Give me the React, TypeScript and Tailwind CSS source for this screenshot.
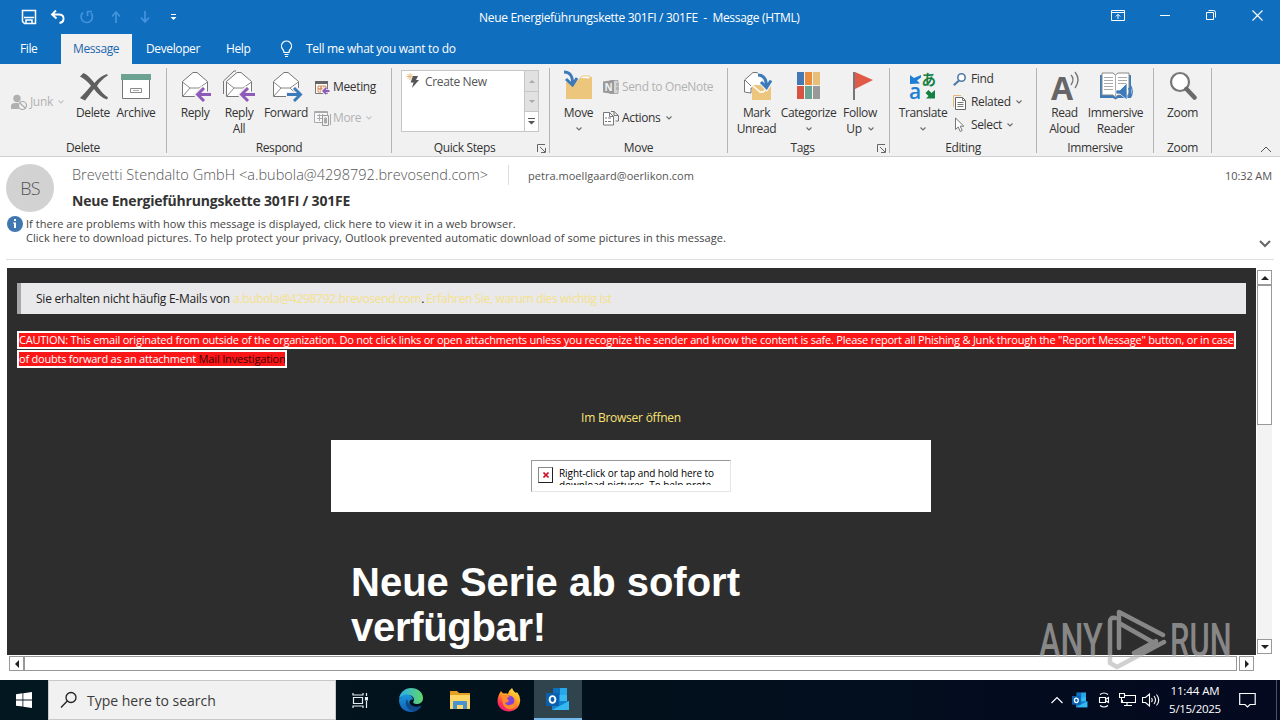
import type { ReactNode } from "react";

const BigButton = ({ icon, lines, caret, className }: { icon: ReactNode; lines: string[]; caret?: boolean; className: string }) => (
    <button className={`flex flex-col items-center shrink-0 pt-[6px] ${className}`}>
        <span className="h-[35px] flex items-start">{icon}</span>
        {lines.map((line, i) => (
            <span key={line} className="h-4 leading-4 flex items-center whitespace-nowrap">
                {line}
                {caret && lines.length > 1 && i === lines.length - 1 && <Caret className="ml-1.5" />}
            </span>
        ))}
        {caret && lines.length === 1 && <Caret className="mt-1.5" />}
    </button>
);

const SmallButton = ({ icon, label, caret, disabled }: { icon: ReactNode; label: string; caret?: boolean; disabled?: boolean }) => (
    <button className={`flex items-center h-5 whitespace-nowrap ${disabled ? "text-[#b1b1b1]" : "text-[#333]"}`}>
        <span className="w-[19px] shrink-0 flex items-center">{icon}</span>
        <span className="tracking-[-0.35px]">{label}</span>
        {caret && <Caret className="ml-[5px]" />}
    </button>
);

const Caret = ({ className = "" }: { className?: string }) => (
    <svg width="6" height="4" viewBox="0 0 6 4" className={`opacity-70 ${className}`}>
        <path d="M.5.5 3 3 5.500.5" fill="none" stroke="currentColor" strokeWidth="1.100" />
    </svg>
);

const Launcher = () => (
    <svg width="9" height="9" viewBox="0 0 9 9" fill="none" stroke="#666">
        <path d="M.5 8V.5H8M3 3l5 5M8.500 4v4.500H4" />
    </svg>
);

const Group = ({ label, launcher, className, children }: { label: string; launcher?: boolean; className: string; children: ReactNode }) => (
    <section className={`flex shrink-0 ${className}`}>
        <div className="flex flex-col flex-1 min-w-0">
            <div className="flex h-[76px]">{children}</div>
            <div className="flex h-4 items-center">
                <span className="flex-1 text-center leading-4">{label}</span>
                {launcher && <span className="w-3"><Launcher /></span>}
            </div>
        </div>
        <div className="w-px h-[85px] mt-1 bg-[#b5b5b5]" />
    </section>
);

/* ribbon icons */
const Envelope = ({ children, double }: { children?: ReactNode; double?: boolean }) => (
    <svg width="34" height="32" viewBox="0 0 34 32" fill="none">
        {double && <path d="M1.500 24V11L12 1h2" stroke="#777" />}
        <path d="M4.500 26.500v-15L15 2.500h4l10.500 9v15z" fill="#fff" stroke="#777" />
        <path d="M4.500 12 12 18h9l8.500-6M5 26l7-8M21 18l4 4" stroke="#888" />
        {children}
    </svg>
);
const ReplyArrow = () => (
    <>
        <path d="M33 24.500H20M26 17.500l-7 7 7 7" stroke="#f1f1f1" strokeWidth="6" />
        <path d="M33 24.500H20M26 18l-6.500 6.500L26 31" stroke="#8f5bb8" strokeWidth="2.900" />
    </>
);
const ForwardArrow = () => (
    <>
        <path d="M17 24.500h14M25 17.500l7 7-7 7" stroke="#f1f1f1" strokeWidth="6" />
        <path d="M18 24.500h13M25 18l6.500 6.500L25 31" stroke="#3c7ab9" strokeWidth="2.900" />
    </>
);
const DeleteIcon = () => (
    <svg width="30" height="30" viewBox="0 0 30 30" fill="#5f5f5f" className="mt-0.5 ml-0.5">
        <path d="M1 4.500 4.500 1C9 3 12 7 15.500 11 19 7 23 3.500 28 2l.800 1.500C24 6.500 20.500 10 18 14c3 4 6.500 8.500 11 11.500L28 27.500c-5-1.500-9.500-5.500-13-10.500-3.500 4-6 8-9 11.500L1 26C5 22 8.500 18 12 13.800 9 10 5 6.500 1 4.500z" />
    </svg>
);
const ArchiveIcon = () => (
    <svg width="32" height="28" viewBox="0 0 32 28" className="mt-[3px]">
        <path d="M2.500 6.500h27v19h-27z" fill="#fff" stroke="#777" />
        <path d="M1 1h30v6H1z" fill="#6ba292" />
        <path d="M10.500 15.500h11v4h-11z" fill="#fff" stroke="#888" />
        <path d="M13 17.500h6" stroke="#aaa" />
    </svg>
);
const JunkIcon = () => (
    <svg width="17" height="17" viewBox="0 0 17 17" fill="#b0b0b0">
        <circle cx="6" cy="4.500" r="3.700" />
        <path d="M0 15v-3q0-3 4-3h3l1 6z" />
        <circle cx="11.500" cy="11.500" r="4" fill="#f1f1f1" stroke="#aaa" strokeWidth="1.200" />
        <path d="m8.500 8.700 6 5.600" stroke="#aaa" strokeWidth="1.200" />
    </svg>
);
const MeetingIcon = () => (
    <svg width="16" height="15" viewBox="0 0 16 15" fill="none">
        <path d="M1.500 3v10.500h12V3" fill="#fff" stroke="#777" />
        <path d="M1 1h13v3H1z" fill="#666" />
        <path d="M4 6h3v3H4zM7 6h3v3H7zM4 9h3v3H4zM10 6h2v3" stroke="#d88b55" />
        <path d="M15.500 11H9m3-3-3 3 3 3" stroke="#f1f1f1" strokeWidth="3.500" />
        <path d="M15.500 11H9.500m2.800-3-3 3 3 3" stroke="#8f5bb8" strokeWidth="1.800" />
    </svg>
);
const MoreIcon = () => (
    <svg width="17" height="16" viewBox="0 0 17 16" fill="none" stroke="#aaa">
        <path d="M.5 1.500h13v11H.5z" fill="#f8f8f8" />
        <path d="M.5 2.500h13M3 5.500h7M3 8.500h5M5.500 4v7M8.500 4v7" />
        <path d="M8.500 5.500h6v10h-6z" fill="#f1f1f1" stroke="#999" />
        <path d="M10.500 8h2v5h-2z" fill="#aaa" />
        <path d="M16.500 4v11" />
    </svg>
);
const BoltIcon = () => (
    <svg width="15" height="16" viewBox="0 0 15 16">
        <path d="M4 0v7M.5 3.500h7M1.500 1l5 5M6.500 1l-5 5" stroke="#e3b878" strokeWidth=".9" />
        <path d="M7 3h5l-2 4h3L6 15l1.500-5.500H4.500z" fill="#555" />
    </svg>
);
const MoveIcon = () => (
    <svg width="31" height="32" viewBox="0 0 31 32">
        <path d="M3 29V12h10l5-5h11v22z" fill="#ecc67c" />
        <path d="M17 8.500 19 6h8v3z" fill="#fff" stroke="#ecc67c" />
        <path d="M1 2q9 0 8.500 12M3 9l6.500 6L14 8" fill="none" stroke="#3c7ab9" strokeWidth="3" />
    </svg>
);
const OneNoteIcon = () => (
    <svg width="17" height="16" viewBox="0 0 17 16">
        <path d="M7 1.500h8v13H7z" fill="#d5d5d5" stroke="#aaa" />
        <path d="M13 4h3v3h-3zM13 8h3v3h-3z" fill="#b5b5b5" />
        <path d="M0 2.500 11 1v14L0 13.500z" fill="#999" />
        <text x="1.500" y="11.500" fontSize="10" fontWeight="700" fill="#f1f1f1" fontFamily="Open Sans, sans-serif">N</text>
    </svg>
);
const ActionsIcon = () => (
    <svg width="17" height="16" viewBox="0 0 17 16" fill="none" stroke="#777">
        <path d="M.5 2.500h6l4 4v8.500H.5z" fill="#fff" />
        <path d="M6.500 2.500v4h4M2 8h2M2 11.500h2M5 8h3M5 11.500h3M8 1.500h3l4.500 4V11h-3M11 1.500v4h4" />
    </svg>
);
const UnreadIcon = () => (
    <svg width="32" height="32" viewBox="0 0 32 32" fill="none">
        <path d="M3.500 22V10L12 2.500h4L25 10v8H10v5z" fill="#fff" stroke="#777" />
        <path d="m4 10 6 6" stroke="#777" />
        <path d="M11 15h19v15H11z" fill="#ecc67c" />
        <path d="m11 15 8 7h3l8-7" stroke="#fff" strokeWidth="1.500" />
        <path d="M17 5q9 0 8.500 12M20 12l5.500 6 4.500-7" stroke="#f1f1f1" strokeWidth="5" />
        <path d="M17 5q8.500 0 8.500 12M20 12l5.500 5.500 4.500-7" stroke="#3c7ab9" strokeWidth="3" />
    </svg>
);
const CategorizeIcon = () => (
    <svg width="26" height="30" viewBox="0 0 26 30" className="mt-px">
        <path d="M1 1h7v13H1z" fill="#4478b5" />
        <path d="M9 1h7v13H9z" fill="#e88d3d" />
        <path d="M17 1h7v13h-7z" fill="#e7bf78" />
        <path d="M1 15h7v13H1z" fill="#d75342" />
        <path d="M9 15h7v13H9z" fill="#6ba292" />
        <path d="M17 15h7v13h-7z" fill="#999" />
    </svg>
);
const FlagIcon = () => (
    <svg width="22" height="32" viewBox="0 0 22 32" className="ml-1">
        <path d="M4 2v17L22 10z" fill="#e05a45" />
        <path d="M2 2h2v28H2z" fill="#777" />
    </svg>
);
const TranslateIcon = () => (
    <svg width="30" height="32" viewBox="0 0 30 32" className="overflow-visible">
        <path d="M2 5v9l10-.5-3-3 4-3V5L6 8z" fill="#1d7fd3" />
        <path d="M27 28.500h-9l2.500-2.500-3-3 3-3 3 3 3.500-3z" fill="#168043" />
        <text x="13.500" y="15" fontSize="14.500" fontWeight="700" fill="#168043" fontFamily="Noto Sans CJK JP, sans-serif">あ</text>
        <text x="1" y="29" fontSize="21" fontWeight="600" fill="#1d7fd3" fontFamily="Open Sans, sans-serif">a</text>
    </svg>
);
const FindIcon = () => (
    <svg width="14" height="13" viewBox="0 0 14 13" fill="none" stroke="#5079a6">
        <circle cx="8.500" cy="4.500" r="3.700" strokeWidth="1.600" fill="#fff" />
        <path d="M6 7.500.8 12.200" strokeWidth="2.200" />
    </svg>
);
const RelatedIcon = () => (
    <svg width="14" height="15" viewBox="0 0 14 15" fill="none">
        <path d="M.5 12V.5H8" stroke="#e3b878" />
        <path d="M2.500 2.500h7l3 3v9h-10z" fill="#fff" stroke="#666" />
        <path d="M9.500 2.500v3h3M4.500 7.500h6M4.500 9.500h6M4.500 11.500h6" stroke="#777" />
    </svg>
);
const SelectIcon = () => (
    <svg width="12" height="16" viewBox="0 0 12 16">
        <path d="M2.500 1v11.500l2.700-2.500 2 4.500 2-1-2-4.300h3.600z" fill="#fff" stroke="#777" />
    </svg>
);
const ReadAloudIcon = () => (
    <svg width="32" height="32" viewBox="0 0 32 32" className="overflow-visible">
        <text x="2" y="29.500" fontSize="32" fontWeight="700" fill="#666" fontFamily="Open Sans, sans-serif">A</text>
        <path d="M22 5q4 4 0 10M26 2q6 7.500 0 16" fill="none" stroke="#777" strokeWidth="1.400" />
    </svg>
);
const ReaderIcon = () => (
    <svg width="34" height="32" viewBox="0 0 34 32" fill="none">
        <path d="M1 5h31v23H19l-2.500 1.500L14 28H1z" fill="#3c7ab9" />
        <path d="M3 3h11l2.500 2L19 3h11v22H19l-2.500 2L14 25H3z" fill="#fff" stroke="#888" />
        <path d="M16.500 5v21M5 7.500h9M5 10.500h9M5 13.500h9M5 16.500h9M5 19.500h9M19 7.500h9M19 10.500h9M19 13.500h9" stroke="#aaa" />
        <path d="M17 20h4l7-7v17l-7-6h-4z" fill="#3c7ab9" stroke="#fff" strokeWidth=".7" />
        <path d="M29.500 18q2 3.500 0 7M31.500 15.500q3.500 6 0 12" stroke="#3c7ab9" strokeWidth="1.300" />
    </svg>
);
const ZoomIcon = () => (
    <svg width="28" height="30" viewBox="0 0 28 30" className="mt-px">
        <circle cx="11" cy="11" r="9" fill="#fff" stroke="#777" strokeWidth="2.200" />
        <path d="m17.500 18 8 8.500" stroke="#6a6a6a" strokeWidth="4.500" strokeLinecap="round" />
    </svg>
);

/* shared by the taskbar button and the tray */
const OutlookIcon = ({ size }: { size: number }) => (
    <svg width={size} height={size} viewBox="0 0 24 24">
        <path d="M7 1h14v17H7z" fill="#1490df" />
        <path d="M7 1h7v7H7z" fill="#0f6fbf" />
        <path d="M14 1h7v7h-7z" fill="#28a8ea" />
        <path d="M14 8h7v6h-7z" fill="#50d9ff" opacity=".6" />
        <path d="M6 14h17v9H6z" fill="#1481cf" />
        <path d="m6 23 17-9v9z" fill="#35b8f1" />
        <path d="M0 6h13v13H0z" fill="#0a5fae" />
        <ellipse cx="6.500" cy="12.500" rx="2.900" ry="3.400" fill="none" stroke="#fff" strokeWidth="1.900" />
    </svg>
);

const TitleBar = () => (
    <div className="flex h-[34px] items-center justify-between text-white relative">
        <div className="flex items-center pl-[21px]">
            <svg width="16" height="16" viewBox="0 0 16 16" fill="none" stroke="#fff" strokeWidth="1.500" className="mr-[13px]">
                <path d="M1.500 1.500h13v13h-11l-2-2zM3 8.500h10M5 14.500v-3.500h6v3.500" />
            </svg>
            <svg width="16" height="16" viewBox="0 0 16 16" fill="none" stroke="#fff" strokeWidth="1.900" className="mr-[13px]">
                <path d="M6 1.500 2 5.500l4.500 4M2 5.500h7.500q4.500.5 4 5-.5 3-4 3.500" />
            </svg>
            <svg width="16" height="16" viewBox="0 0 16 16" fill="none" stroke="#4393dc" strokeWidth="1.700" className="mr-[15px]">
                <path d="M4 3.500A5.700 5.700 0 1 0 12 4M8.500 7V2.500H13" />
            </svg>
            <svg width="12" height="14" viewBox="0 0 12 14" fill="none" stroke="#4393dc" strokeWidth="1.700" className="mr-[17px]">
                <path d="M6 13V3M2 6.500 6 2l4 4.500" />
            </svg>
            <svg width="12" height="14" viewBox="0 0 12 14" fill="none" stroke="#4393dc" strokeWidth="1.700" className="mr-[19px]">
                <path d="M6 1v10M2 7.500 6 12l4-4.500" />
            </svg>
            <svg width="7" height="8" viewBox="0 0 7 8" fill="#fff">
                <path d="M1 1h5v1H1zM.5 4h6l-3 3z" />
            </svg>
        </div>
        <div className="absolute left-[479px] top-[10px] text-[12px] leading-4 tracking-[-0.32px] whitespace-pre">{"Neue Energieführungskette 301FI / 301FE  -  Message (HTML)"}</div>
        <div className="flex items-center pr-[17px] -mt-1">
            <svg width="14" height="11" viewBox="0 0 14 11" fill="none" stroke="#fff" className="mr-[35px]">
                <path d="M.5.5h13v10H.5zM.5 2.500h13M7 9V4.500M4.800 6.500 7 4.300l2.200 2.200" />
            </svg>
            <svg width="10" height="11" viewBox="0 0 10 11" stroke="#fff" className="mr-9"><path d="M0 5.500h10" /></svg>
            <svg width="10" height="10" viewBox="0 0 10 10" fill="none" stroke="#fff" className="mr-9">
                <path d="M.5 2.500h7v7h-7z" /><path d="M2.500.5h5q2 0 2 2v5" />
            </svg>
            <svg width="11" height="11" viewBox="0 0 11 11" stroke="#fff" strokeWidth="1.100"><path d="m.5.5 10 10M10.500.5l-10 10" /></svg>
        </div>
    </div>
);

const Tabs = () => (
    <nav className="flex h-[30px] text-white text-[12px] tracking-[-0.38px] leading-[30px]">
        <span className="w-[61px] pl-5">File</span>
        <span className="w-[71px] pl-3 bg-[#f1f1f1] text-[#1a65ad]">Message</span>
        <span className="w-[94px] pl-3.5">Developer</span>
        <span className="w-[54px]">Help</span>
        <svg width="13" height="18" viewBox="0 0 13 18" fill="none" stroke="#fff" strokeWidth="1.200" className="mt-1.5 mr-[13px]">
            <path d="M4 12.500q0-2-1.500-3.500a5 5 0 1 1 8 0Q9 10.500 9 12.500zM4.500 14.500h4M5 16.500h3" />
        </svg>
        <span className="tracking-[-0.3px]">Tell me what you want to do</span>
    </nav>
);

const Ribbon = () => (
    <div className="flex h-[93px] bg-[#f1f1f1] border-b border-[#d0d0d0] text-[12px] tracking-[-0.37px] text-[#333]">
        <Group label="Delete" className="w-[167px]">
            <div className="w-[70px] pl-[11px] pt-7 shrink-0">
                <SmallButton icon={<JunkIcon />} label="Junk" caret disabled />
            </div>
            <BigButton className="w-11 ml-px" icon={<DeleteIcon />} lines={["Delete"]} />
            <BigButton className="w-11 -ml-px" icon={<ArchiveIcon />} lines={["Archive"]} />
        </Group>
        <Group label="Respond" className="w-[225px]">
            <BigButton className="w-11 ml-[6px]" icon={<Envelope><ReplyArrow /></Envelope>} lines={["Reply"]} />
            <BigButton className="w-11" icon={<Envelope double><ReplyArrow /></Envelope>} lines={["Reply", "All"]} />
            <BigButton className="w-[50px]" icon={<Envelope><ForwardArrow /></Envelope>} lines={["Forward"]} />
            <div className="pt-[13px] pl-[3px] flex flex-col gap-[11px]">
                <SmallButton icon={<MeetingIcon />} label="Meeting" />
                <SmallButton icon={<MoreIcon />} label="More" caret disabled />
            </div>
        </Group>
        <Group label="Quick Steps" launcher className="w-[158px]">
            <div className="flex w-[138px] h-[62px] mt-[6px] ml-[9px] bg-white border border-[#c6c6c6] text-[#555]">
                <div className="flex-1 flex items-start pl-1 pt-0.5">
                    <BoltIcon />
                    <span className="ml-1 mt-px leading-4 tracking-[-0.35px]">Create New</span>
                </div>
                <div className="w-[14px] border-l border-[#c6c6c6] flex flex-col">
                    <span className="h-[21px] bg-[#e1e1e1] border-b border-[#c6c6c6] flex items-center justify-center">
                        <svg width="6" height="3" viewBox="0 0 6 3" fill="#aaa"><path d="M0 3 3 0l3 3z" /></svg>
                    </span>
                    <span className="h-5 bg-[#e1e1e1] border-b border-[#c6c6c6] flex items-center justify-center">
                        <svg width="6" height="3" viewBox="0 0 6 3" fill="#aaa"><path d="m0 0 3 3 3-3z" /></svg>
                    </span>
                    <span className="flex-1 flex items-center justify-center">
                        <svg width="7" height="7" viewBox="0 0 7 7" fill="#555"><path d="M0 0h7v1H0zM0 3h7L3.500 6.500z" /></svg>
                    </span>
                </div>
            </div>
        </Group>
        <Group label="Move" className="w-[178px]">
            <BigButton className="w-[41px] ml-2" icon={<MoveIcon />} lines={["Move"]} caret />
            <div className="pt-[13px] pl-[4px] flex flex-col gap-[11px]">
                <SmallButton icon={<OneNoteIcon />} label="Send to OneNote" disabled />
                <SmallButton icon={<ActionsIcon />} label="Actions" caret />
            </div>
        </Group>
        <Group label="Tags" launcher className="w-[162px]">
            <BigButton className="w-[45px] ml-[6px]" icon={<UnreadIcon />} lines={["Mark", "Unread"]} />
            <BigButton className="w-[59px]" icon={<CategorizeIcon />} lines={["Categorize"]} caret />
            <BigButton className="w-[42px] ml-[1px]" icon={<FlagIcon />} lines={["Follow", "Up"]} caret />
        </Group>
        <Group label="Editing" className="w-[147px]">
            <BigButton className="w-[50px] ml-2" icon={<TranslateIcon />} lines={["Translate"]} caret />
            <div className="pt-[5px] pl-[5px] flex flex-col gap-[3px] [&_span:first-child]:w-[18px]">
                <SmallButton icon={<FindIcon />} label="Find" />
                <SmallButton icon={<RelatedIcon />} label="Related" caret />
                <SmallButton icon={<SelectIcon />} label="Select" caret />
            </div>
        </Group>
        <Group label="Immersive" className="w-[117px]">
            <BigButton className="w-[37px] ml-[9px]" icon={<ReadAloudIcon />} lines={["Read", "Aloud"]} />
            <BigButton className="w-[57px] ml-1" icon={<ReaderIcon />} lines={["Immersive", "Reader"]} />
        </Group>
        <Group label="Zoom" className="w-[58px]">
            <BigButton className="w-[57px]" icon={<ZoomIcon />} lines={["Zoom"]} />
        </Group>
        <div className="flex-1 flex justify-end items-end pr-2 pb-[3px]">
            <svg width="12" height="7" viewBox="0 0 12 7" fill="none" stroke="#555"><path d="m1 6 5-5 5 5" /></svg>
        </div>
    </div>
);

const MessageHeader = () => (
    <header className="h-[103px] mx-[6px] border-b border-[#e0e0e0] flex flex-col">
        <div className="flex h-[58px]">
            <div className="w-12 h-12 mt-[7px] rounded-full bg-[#d2d2d2] text-[#555] text-[18px] tracking-[-0.8px] font-light flex items-center justify-center">BS</div>
            <div className="ml-[18px] flex-1 min-w-0">
                <div className="flex items-center h-5 mt-2 text-[#555]">
                    <span className="text-[14.5px] tracking-[0.03px] font-light w-[436px] whitespace-nowrap">Brevetti Stendalto GmbH &lt;a.bubola@4298792.brevosend.com&gt;</span>
                    <span className="w-px h-5 bg-[#ddd]" />
                    <span className="ml-[19px] text-[11px] tracking-[0.03px] flex-1 mt-0.5">petra.moellgaard@oerlikon.com</span>
                    <span className="text-[11px] tracking-[-0.1px] mt-0.5 mr-[2px]">10:32 AM</span>
                </div>
                <h1 className="mt-1.5 text-[14px] tracking-[-0.21px] leading-5 font-bold text-[#333]">Neue Energieführungskette 301FI / 301FE</h1>
            </div>
        </div>
        <div className="flex text-[11px] leading-[14px] text-[#444]">
            <svg width="16" height="16" viewBox="0 0 16 16" className="ml-px mt-px mr-[3px]">
                <circle cx="8" cy="8" r="8" fill="#3f77b0" />
                <path d="M7 3h2v2H7zM6 6.500h3V12H7V7.500H6z" fill="#fff" />
            </svg>
            <div className="flex-1 mt-0.5">
                <p className="tracking-[0.03px]">If there are problems with how this message is displayed, click here to view it in a web browser.</p>
                <p className="tracking-[0.043px]">Click here to download pictures. To help protect your privacy, Outlook prevented automatic download of some pictures in this message.</p>
            </div>
            <svg width="12" height="8" viewBox="0 0 12 8" fill="none" stroke="#666" strokeWidth="2" className="mt-[25px] mr-[3px]"><path d="m1 1 5 5 5-5" /></svg>
        </div>
    </header>
);

const MailBody = () => (
    <article className="w-[1249px] h-[387px] bg-[#2d2d2d] overflow-hidden pt-[15px] pl-[10px] pr-[10px]">
        <div className="h-[31px] bg-[#e9e8ea] border-l-4 border-[#a6a6a6] pl-[15px] leading-[32px] text-[12px] tracking-[-0.22px] text-[#222] flex whitespace-pre">
            <span className="w-[197px]">Sie erhalten nicht häufig E-Mails von</span>
            <span className="text-[#f4e28c] tracking-[-0.3px]">a.bubola@4298792.brevosend.com</span>
            <span className="w-[5px]">.</span>
            <span className="text-[#f4e28c] tracking-[-0.36px]">Erfahren Sie, warum dies wichtig ist</span>
        </div>
        <div className="mt-[17px] flex flex-col items-start gap-px text-[11px] tracking-[-0.224px] text-white whitespace-pre">
            <p className="h-[18px] w-[1219px] leading-[14px] border-2 border-white bg-[#fb1718]">CAUTION: This email originated from outside of the organization. Do not click links or open attachments unless you recognize the sender and know the content is safe. Please report all Phishing &amp; Junk through the "Report Message" button, or in case</p>
            <p className="h-[18px] w-[270px] leading-[14px] border-2 border-white bg-[#fb1718]">of doubts forward as an attachment <span className="text-[#3a0808] tracking-[-0.17px]">Mail Investigation</span></p>
        </div>
        <p className="mt-[41px] h-[18px] leading-[18px] text-center text-[12px] tracking-[-0.24px] text-[#fbe373] pr-px">Im Browser öffnen</p>
        <div className="w-[600px] ml-[314px] mt-[13px]">
            <div className="h-[72px] bg-white flex justify-center items-center">
                <div className="w-[200px] h-8 border border-t-[#999] border-l-[#999] border-[#e6e6e6] flex pl-1.5 pt-1.5">
                    <span className="w-[15px] h-4 border border-t-[#888] border-l-[#888] border-b-[#222] border-r-[#222] flex items-center justify-center shrink-0">
                        <svg width="6" height="6" viewBox="0 0 6 6" stroke="#d0142c" strokeWidth="1.600"><path d="m.5.5 5 5M5.500.5l-5 5" /></svg>
                    </span>
                    <p className="ml-1.5 h-[18px] overflow-hidden text-[10px] leading-3 tracking-[-0.07px] text-black whitespace-nowrap">
                        Right-click or tap and hold here to<br />download pictures. To help prote
                    </p>
                </div>
            </div>
            <h2 className="mt-12 pl-5 font-['Liberation_Sans',sans-serif] font-bold text-[40px] leading-[45px] text-white">
                Neue Serie ab sofort<br /><span className="tracking-[-0.3px]">verfügbar!</span>
            </h2>
        </div>
    </article>
);

const ArrowBox = ({ d, className }: { d: string; className: string }) => (
    <span className={`border border-[#999] bg-white flex items-center justify-center shrink-0 ${className}`}>
        <svg width="8" height="8" viewBox="0 0 8 8" fill="#222"><path d={d} /></svg>
    </span>
);

const Watermark = () => (
    <div className="absolute left-[1039px] top-[607px] w-[196px] h-[66px] flex items-center opacity-65 text-[#b8b8b8] font-['Roboto',sans-serif] font-medium text-[49px] leading-none">
        <span className="w-[66px] shrink-0"><span className="inline-block origin-left scale-x-[0.66]">ANY</span></span>
        <svg width="62" height="66" viewBox="0 0 62 66" fill="none" stroke="currentColor" strokeWidth="4.500" strokeLinejoin="round" strokeLinecap="round" className="shrink-0">
            <path d="M10 11q-5-1-5 4v41M14 41V5l44 23M14 16l37 21M59 35 12 60 5 56M29 46l22-12" />
        </svg>
        <span className="ml-[3px] shrink-0 w-[62px]"><span className="inline-block origin-left scale-x-[0.63]">RUN</span></span>
    </div>
);

const Taskbar = () => (
    <footer className="h-10 mt-2 flex items-center bg-gradient-to-r from-[#02171f] via-[#02101c] to-[#040920]">
        <svg width="48" height="40" viewBox="0 0 48 40" fill="#fff">
            <path d="m16 14.200 6.500-.9v6.200H16zM23.300 13.200 32 12v7.500h-8.700zM16 20.400h6.500v6.200l-6.500-.9zM23.300 20.400H32V28l-8.700-1.200z" />
        </svg>
        <div className="w-72 h-10 bg-[#f1f1f1] border border-[#c8c8c8] flex items-center pl-[11px] text-[14px] text-[#3b3b3b]">
            <svg width="18" height="18" viewBox="0 0 18 18" fill="none" stroke="#222" strokeWidth="1.300">
                <circle cx="11" cy="6.500" r="5" /><path d="M7.300 10 1 16.500" />
            </svg>
            <span className="ml-[9px]">Type here to search</span>
        </div>
        <div className="w-12 flex justify-center">
            <svg width="16" height="16" viewBox="0 0 16 16" fill="none" stroke="#e8eef0" strokeWidth="1.200">
                <path d="M1.500 5.500h9v6h-9zM1 1v2h10V1M1 16v-2h10v2M14.500 1v3M14.500 9v7" /><path d="M13.500 5.500h2v2.500h-2z" fill="#fff" />
            </svg>
        </div>
        <div className="w-[54px] flex justify-center">
            <svg width="24" height="24" viewBox="0 0 24 24">
                <defs>
                    <linearGradient id="edgeTop" x1="0" x2="1"><stop stopColor="#2aaeea" /><stop offset="1" stopColor="#62d66b" /></linearGradient>
                    <linearGradient id="edgeBody" x1="0" y1="0" x2="0" y2="1"><stop stopColor="#1b97dc" /><stop offset="1" stopColor="#1060b5" /></linearGradient>
                </defs>
                <path d="M0 11C1 4 6 0 12 0c7 0 12 4.500 12 10 0 4-3 6-6.500 6-2.500 0-4-1-3-2.500C16 11 14 7 9.500 7 5 7 1 9 0 11z" fill="url(#edgeTop)" />
                <path d="M0 12c1-4 5-6 9-5.500 3 .5 5 3 5 5C9 11 9 17 15 19c3 1 5.500 0 7.500-1.500C20 22 16 24 12 24 5 24 0 19 0 12z" fill="url(#edgeBody)" />
                <path d="M8 11c-3 4-1 10 6 12.500 3-.5 6-2 8.500-6C17 20.500 9 18 8 11z" fill="#114a8b" />
            </svg>
        </div>
        <div className="w-11 flex justify-center">
            <svg width="22" height="20" viewBox="0 0 22 20">
                <path d="M1 1h7l2 2h11v5H1z" fill="#e5a024" />
                <path d="M1 5h20v14H1z" fill="#ffd767" />
                <path d="M4 19v-7q0-1 1-1h12q1 0 1 1v7h-4v-4H8v4z" fill="#4693cf" />
            </svg>
        </div>
        <div className="w-[52px] pl-0.5 flex justify-center">
            <svg width="24" height="24" viewBox="0 0 24 24">
                <defs>
                    <linearGradient id="fox" x1=".8" y1="0" x2=".2" y2="1"><stop stopColor="#ffe63d" /><stop offset=".45" stopColor="#ff9a24" /><stop offset=".75" stopColor="#ff3750" /><stop offset="1" stopColor="#e31587" /></linearGradient>
                </defs>
                <path d="M4 3q1 2 3 2.500Q10 5 11 6q1-4 4-6 1 3 4 5l1-1q4 5 3 10c-1 6-6 9.500-11 9.500C5.500 23.500.5 19 .5 13 .5 9 2 6 4 3z" fill="url(#fox)" />
                <circle cx="12" cy="13" r="5.500" fill="#8042d8" />
                <path d="M5 8q4-2 8 1-3 0-3 2 3 1 1 3-2 1-3 0 1 4 5 3 5-1 5-6 3 8-3 10-7 1-9-5-1-4-1-8z" fill="#ff8b2b" />
            </svg>
        </div>
        <div className="w-12 h-10 bg-[#30444e] border-b-2 border-[#76b9ed] flex items-center justify-center"><OutlookIcon size={24} /></div>
        <div className="flex-1" />
        <div className="flex items-center text-white">
            <svg width="12" height="8" viewBox="0 0 12 8" fill="none" stroke="#fff" strokeWidth="1.200"><path d="m.5 7 5.500-5.500L11.500 7" /></svg>
            <span className="ml-[9px]"><OutlookIcon size={16} /></span>
            <svg width="12" height="16" viewBox="0 0 12 16" fill="none" stroke="#fff" strokeWidth="1.100" className="ml-[10px]">
                <path d="M1.500 5.500h6v5h-6zM7.500 7.500l3-2v5l-3-2M2 2.500q4-3 8 0M2 13.500q4 3 8 0" />
            </svg>
            <svg width="17" height="16" viewBox="0 0 17 16" fill="none" stroke="#fff" strokeWidth="1.100" className="ml-[9px]">
                <path d="M6 3.500h10.500v7H3.500V8M.5 1.500h5v4h-5zM2.500 6v5M8 10.500v3M5 13.500h8" />
            </svg>
            <svg width="18" height="14" viewBox="0 0 18 14" fill="none" stroke="#fff" strokeWidth="1.100" className="ml-1.5">
                <path d="M.5 4.500h3l4-3.500v12l-4-3.500h-3zM9.500 5q1.500 2 0 4M12 3q3 4 0 8M14.500 1.500q4.500 5.500 0 11" />
            </svg>
            <div className="ml-2 w-[54px] text-center text-[11.5px] leading-[18px] whitespace-nowrap">
                <div className="tracking-[-0.1px]">11:44 AM</div>
                <div className="tracking-[-0.3px]">5/15/2025</div>
            </div>
            <svg width="17" height="16" viewBox="0 0 17 16" fill="none" stroke="#fff" strokeWidth="1.200" className="ml-[17px]">
                <path d="M.7 1.500h15.500v11H11l-2.500 2.500L6 12.500H.7z" />
            </svg>
            <span className="ml-[20px] mr-[3px] w-px h-10 bg-[#4b5260]" />
        </div>
    </footer>
);

export default function App() {
    return (
        <main className="relative w-[1280px] h-[720px] overflow-hidden bg-white font-['Open_Sans',sans-serif]">
            <div className="bg-[#106ebe]">
                <TitleBar />
                <Tabs />
            </div>
            <Ribbon />
            <MessageHeader />
            <div className="flex mt-2 pl-[7px]">
                <MailBody />
                <div className="ml-px mt-0.5 w-[15px] h-[384px] bg-[#f3f3f3] flex flex-col">
                    <ArrowBox className="h-[15px]" d="M0 6h8L4 2z" />
                    <span className="h-[140px] border border-[#999] bg-white" />
                    <span className="flex-1" />
                    <ArrowBox className="h-[15px]" d="M0 2h8L4 6z" />
                </div>
            </div>
            <div className="flex h-[15px] mt-px ml-[9px] w-[1245px]">
                <ArrowBox className="w-[15px]" d="M6 0v8L2 4z" />
                <span className="w-[1213px] border border-[#999] bg-white" />
                <span className="flex-1" />
                <ArrowBox className="w-[15px]" d="M2 0v8l4-4z" />
            </div>
            <div className="h-px" />
            <Taskbar />
            <Watermark />
        </main>
    );
}
